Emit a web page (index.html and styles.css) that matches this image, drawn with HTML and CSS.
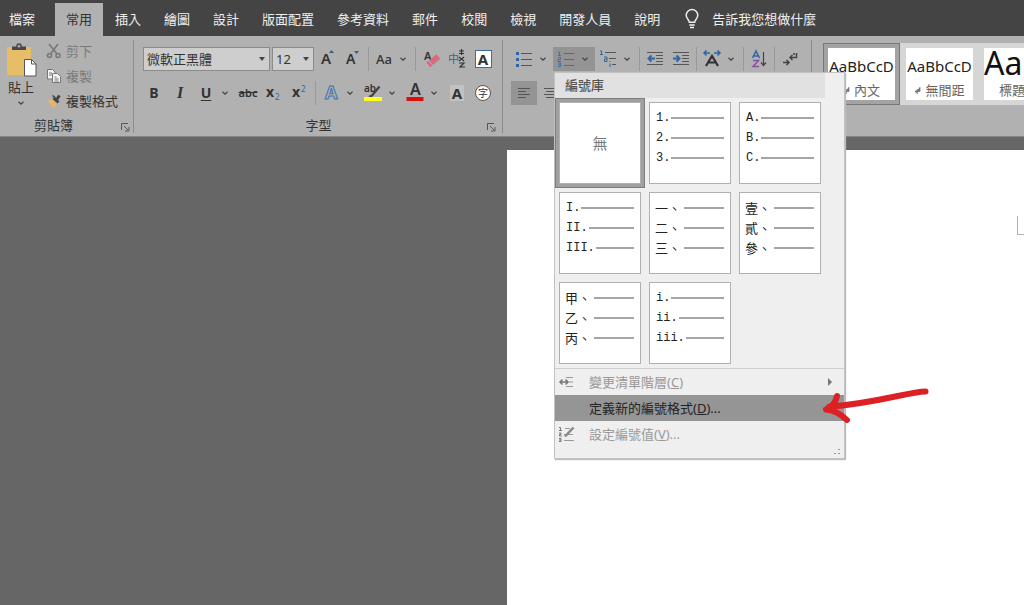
FILE: index.html
```html
<!DOCTYPE html>
<html lang="zh-Hant">
<head>
<meta charset="utf-8">
<title>Word</title>
<link rel="stylesheet" href="styles.css">
</head>
<body>
<svg class="defs" aria-hidden="true">
  <symbol id="chev" viewBox="0 0 6 4"><path d="M.5 .7 3 3.1 5.500 .7" fill="none" stroke="#444" stroke-width="1.200"/></symbol>
  <symbol id="launch" viewBox="0 0 9 9"><path d="M.5 7V.5H7M3 3l4 4M8 4v4H4" fill="none" stroke="#555"/></symbol>
  <symbol id="tri" viewBox="0 0 6 4"><path d="M0 0h6L3 4z" fill="#444"/></symbol>
  <symbol id="ret" viewBox="0 0 7 7"><path d="M6 0v4.500H2M3.500 2.500 1 4.500l2.500 2z" fill="#777" stroke="#777" stroke-width=".8"/></symbol>
</svg>

<nav class="tabs">
  <button class="tab file">檔案</button>
  <button class="tab active">常用</button>
  <button class="tab">插入</button>
  <button class="tab">繪圖</button>
  <button class="tab">設計</button>
  <button class="tab">版面配置</button>
  <button class="tab">參考資料</button>
  <button class="tab">郵件</button>
  <button class="tab">校閱</button>
  <button class="tab">檢視</button>
  <button class="tab">開發人員</button>
  <button class="tab">說明</button>
  <button class="tab tell">
    <svg width="14" height="20" viewBox="0 0 14 20"><path d="M4.300 13.200C4.300 10.800 1.200 9.800 1.200 6.300a5.800 5.800 0 0 1 11.600 0c0 3.500-3.100 4.500-3.100 6.900zM4.300 16h5.400M5 18.500h4" fill="none" stroke="#eee" stroke-width="1.500"/></svg>
    告訴我您想做什麼
  </button>
</nav>

<header class="ribbon">
  <section class="group clipboard">
    <div class="clip-body">
      <button class="paste">
        <svg width="32" height="36" viewBox="0 0 32 36"><path d="M2 5h24v28H2z" fill="#e8bd67"/><path d="M7 8V4.500h4l1-3h4l1 3h4V8z" fill="#484848"/><circle cx="14" cy="4.300" r="1.300" fill="#b1b1b1"/><path d="M19.500 17.500h7l4.500 4.500v12h-11.500z" fill="#fff" stroke="#555"/><path d="M26.500 17.500V22H31" fill="none" stroke="#555"/></svg>
        貼上
        <svg class="chev" width="6" height="4"><use href="#chev"/></svg>
      </button>
      <div class="clip-list">
        <button class="clip-item" disabled>
          <svg width="16" height="16" viewBox="0 0 16 16"><g fill="none" stroke="#777" stroke-width="1.500"><path d="M3 1l8 10M12 1L4.500 11"/><circle cx="3.500" cy="12.500" r="2"/><circle cx="12" cy="12.500" r="2"/></g></svg>剪下</button>
        <button class="clip-item" disabled>
          <svg width="16" height="16" viewBox="0 0 16 16"><g fill="#f4f4f4" stroke="#777"><path d="M1.500 1.500h5l2.500 2.500v7H1.500z"/><path d="M6.500 5.500h5l3 3v6h-8z"/><path d="M3 5h3M3 7h3M8.500 9h2M8.500 11h4M8.500 13h4"/></g></svg>複製</button>
        <button class="clip-item">
          <svg width="16" height="16" viewBox="0 0 16 16"><path d="M1.500 8l4.500-2 5 5-3.500 4z" fill="#e8b566"/><path d="M7.500 5l5 4.500M10 7.500l3.500-5" stroke="#444" stroke-width="3"/><path d="M6.500 2.500l3 2.500" stroke="#444" stroke-width="1.500"/></svg>複製格式</button>
      </div>
    </div>
    <div class="group-label">剪貼簿<button class="launcher" aria-label="剪貼簿選項"><svg width="9" height="9"><use href="#launch"/></svg></button></div>
  </section>

  <section class="group font">
    <div class="row">
      <span class="combo face"><select aria-label="字型"><option>微軟正黑體</option></select><svg width="6" height="4"><use href="#tri"/></svg></span>
      <span class="combo size"><select aria-label="字型大小"><option>12</option></select><svg width="6" height="4"><use href="#tri"/></svg></span>
      <button class="tool" aria-label="放大字型"><svg width="20" height="20" viewBox="0 0 20 20"><text class="ltr" x="4" y="15" font-size="15">A</text><path d="M12 4l2.500-3L17 4z" fill="#365f91"/></svg></button>
      <button class="tool" aria-label="縮小字型"><svg width="20" height="20" viewBox="0 0 20 20"><text class="ltr" x="3" y="15" font-size="14">A</text><path d="M11 2l2.500 3L16 2z" fill="#365f91"/></svg></button>
      <i class="sep"></i>
      <button class="split" aria-label="大小寫轉換"><span class="face-icon aa">Aa</span><svg class="chev" width="6" height="4"><use href="#chev"/></svg></button>
      <i class="sep"></i>
      <button class="tool" aria-label="清除格式設定"><svg width="20" height="20" viewBox="0 0 20 20"><text class="ltr" x="3" y="11" font-size="11">A</text><g transform="rotate(-40 12 12)"><path d="M6 9h13v6H6z" fill="#d9697c"/><path d="M9 9v6" stroke="#b1b1b1"/></g></svg></button>
      <button class="tool" aria-label="注音標示"><svg width="20" height="20" viewBox="0 0 20 20"><text class="cjk" x="1" y="14" font-size="11" fill="#2f66a5">中</text><path d="M12 2h5M12 4.500h5M14.500 0v6M12 8l5 4M17 8l-5 4M12 14h5l-4 4h5" fill="none" stroke="#333" stroke-width="1.200"/></svg></button>
      <button class="tool" aria-label="字元框線"><span class="boxed">A</span></button>
    </div>
    <div class="row">
      <button class="tool b">B</button>
      <button class="tool i">I</button>
      <button class="split" aria-label="底線"><span class="face-icon u">U</span><svg class="chev" width="6" height="4"><use href="#chev"/></svg></button>
      <button class="tool strike">abc</button>
      <button class="tool" aria-label="下標"><svg width="20" height="20" viewBox="0 0 20 20"><text class="ltr bold" x="2" y="14" font-size="14">x</text><text x="11" y="17" font-size="8" fill="#2f66a5">2</text></svg></button>
      <button class="tool" aria-label="上標"><svg width="20" height="20" viewBox="0 0 20 20"><text class="ltr bold" x="2" y="14" font-size="14">x</text><text x="11" y="9" font-size="8" fill="#2f66a5">2</text></svg></button>
      <i class="sep"></i>
      <button class="split" aria-label="文字效果"><span class="face-icon"><svg width="20" height="20" viewBox="0 0 20 20"><text class="glow" x="4" y="16" font-size="18">A</text></svg></span><svg class="chev" width="6" height="4"><use href="#chev"/></svg></button>
      <button class="split" aria-label="醒目提示"><span class="face-icon"><svg width="20" height="20" viewBox="0 0 20 20"><text class="ltr" x="1" y="9" font-size="10">ab</text><path d="M16.500 3.500 9 12.500l-3 1.500" fill="none" stroke="#444" stroke-width="2.200"/><path d="M1 14h18v4H1z" fill="#ffff1e"/></svg></span><svg class="chev" width="6" height="4"><use href="#chev"/></svg></button>
      <button class="split" aria-label="字型色彩"><span class="face-icon"><svg width="20" height="20" viewBox="0 0 20 20"><text class="ltr" x="5" y="12" font-size="16">A</text><path d="M1.500 14h17v4h-17z" fill="#e00d0d"/></svg></span><svg class="chev" width="6" height="4"><use href="#chev"/></svg></button>
      <button class="tool" aria-label="字元網底"><span class="shaded">A</span></button>
      <button class="tool" aria-label="圍繞字元"><span class="circled">字</span></button>
    </div>
    <div class="group-label">字型<button class="launcher" aria-label="字型選項"><svg width="9" height="9"><use href="#launch"/></svg></button></div>
  </section>

  <section class="group para">
    <div class="row">
      <button class="split" aria-label="項目符號"><span class="face-icon"><svg width="18" height="16" viewBox="0 0 18 16"><path d="M6 2.500h11M6 8.500h11M6 14.500h11" stroke="#555"/><path d="M1 1h3v3H1zM1 7h3v3H1zM1 13h3v3H1z" fill="#2f66a5"/></svg></span><svg class="chev" width="6" height="4"><use href="#chev"/></svg></button>
      <div class="menu-anchor">
        <button class="split on" aria-label="編號"><span class="face-icon"><svg width="18" height="16" viewBox="0 0 18 16"><path d="M7 2.500h10M7 8.500h10M7 14.500h10" stroke="#666"/><path d="M1 1h1.500v3.500M1 4.500h3M1 6.500h2.500v2H1v2h3M1 12h2.500v3.500H1M1 13.800h2" fill="none" stroke="#426fa5"/></svg></span><svg class="chev" width="6" height="4"><use href="#chev"/></svg></button>
        <div class="menu">
          <h2 class="menu-title">編號庫</h2>
          <div class="library">
            <button class="tile none">無</button>
            <button class="tile"><span class="line">1.</span><span class="line">2.</span><span class="line">3.</span></button>
            <button class="tile"><span class="line">A.</span><span class="line">B.</span><span class="line">C.</span></button>
            <button class="tile"><span class="line">I.</span><span class="line">II.</span><span class="line">III.</span></button>
            <button class="tile han"><span class="line">一、</span><span class="line">二、</span><span class="line">三、</span></button>
            <button class="tile han"><span class="line">壹、</span><span class="line">貳、</span><span class="line">參、</span></button>
            <button class="tile han"><span class="line">甲、</span><span class="line">乙、</span><span class="line">丙、</span></button>
            <button class="tile"><span class="line">i.</span><span class="line">ii.</span><span class="line">iii.</span></button>
          </div>
          <div class="commands">
            <button class="command" disabled><svg width="16" height="16" viewBox="0 0 16 16"><path d="M7 3.500h7M10 8h4M7 12.500h7" stroke="#999"/><path d="M1 8h8M3.500 5.500 1 8l2.500 2.500M6.500 5.500 9 8l-2.500 2.500" fill="none" stroke="#777" stroke-width="1.500"/></svg><span>變更清單階層(<u>C</u>)</span><svg class="more" width="4" height="8" viewBox="0 0 4 8"><path d="M0 0l4 4-4 4z" fill="#777"/></svg></button>
            <button class="command hover"><i class="blank"></i><span>定義新的編號格式(<u>D</u>)...</span></button>
            <button class="command" disabled><svg width="16" height="16" viewBox="0 0 16 16"><path d="M6 2.500h5M5 8.500h9M5 14.500h10" stroke="#999"/><path d="M14.500 1.500 6 10.500" stroke="#888" stroke-width="2.500"/><path d="M0 1.500h1.500V4M0 4.500h3M0 7h2v1.500H.5V10H3M0 12.500h2v3H0M0 14h2" fill="none" stroke="#777"/></svg><span>設定編號值(<u>V</u>)...</span></button>
          </div>
          <div class="grip"><svg width="8" height="8" viewBox="0 0 8 8"><path d="M5 1h2v1H5zM1 5h2v1H1zM5 5h2v1H5z" fill="#999"/></svg></div>
        </div>
      </div>
      <button class="split" aria-label="多層次清單"><span class="face-icon"><svg width="18" height="18" viewBox="0 0 18 18"><path d="M6 2.500h11M10 8.500h7M13 14.500h4" stroke="#555"/><path d="M1 1h1.500v4M1 4.500h3M5 7h3v4.500M8 9H5.500v2.500H8M11 11v1M11 13.500v3.500" fill="none" stroke="#2f66a5"/></svg></span><svg class="chev" width="6" height="4"><use href="#chev"/></svg></button>
      <i class="sep"></i>
      <button class="tool" aria-label="減少縮排"><svg width="16" height="16" viewBox="0 0 16 16"><path d="M0 1.500h16M9 4.500h7M9 7.500h7M9 10.500h7M0 13.500h16" stroke="#555"/><path d="M8 7.500H2M4.500 4.500l-3 3 3 3" fill="none" stroke="#2f66a5" stroke-width="2"/></svg></button>
      <button class="tool" aria-label="增加縮排"><svg width="16" height="16" viewBox="0 0 16 16"><path d="M0 1.500h16M9 4.500h7M9 7.500h7M9 10.500h7M0 13.500h16" stroke="#555"/><path d="M0 7.500h6M3.500 4.500l3 3-3 3" fill="none" stroke="#2f66a5" stroke-width="2"/></svg></button>
      <i class="sep"></i>
      <button class="split" aria-label="亞洲方式配置"><span class="face-icon"><svg width="20" height="20" viewBox="0 0 20 20"><path d="M4 17 10 7l6 10M6.500 13.500h7" fill="none" stroke="#333" stroke-width="2.200"/><path d="M2 4h6M4.500 1.500 2 4l2.500 2.500M12 4h6M15.500 1.500 18 4l-2.500 2.500" fill="none" stroke="#2f66a5" stroke-width="1.500"/></svg></span><svg class="chev" width="6" height="4"><use href="#chev"/></svg></button>
      <i class="sep"></i>
      <button class="tool" aria-label="排序"><svg width="16" height="18" viewBox="0 0 16 18"><path d="M1.500 8 5 1l3.500 7M2.500 6h5" fill="none" stroke="#2f66a5" stroke-width="1.500"/><path d="M2 10.500h5.500L2 16.500h6" fill="none" stroke="#8a4fa8" stroke-width="1.500"/><path d="M12.500 2v13M10 12.500l2.500 3 2.500-3" fill="none" stroke="#444" stroke-width="1.200"/></svg></button>
      <i class="sep"></i>
      <button class="tool" aria-label="顯示編輯標記"><svg width="16" height="16" viewBox="0 0 16 16"><path d="M14.500 2v4.500H8M10.500 4 8 6.500 10.500 9M12 2v2M1 11.500h6M4.500 9 7 11.500 4.500 14" fill="none" stroke="#444" stroke-width="1.500"/></svg></button>
    </div>
    <div class="row">
      <button class="tool on" aria-label="靠左對齊"><svg width="14" height="14" viewBox="0 0 14 14"><path d="M1 2.500h12M1 5.500h8M1 8.500h12M1 11.500h8" stroke="#555"/></svg></button>
      <button class="tool" aria-label="置中"><svg width="14" height="14" viewBox="0 0 14 14"><path d="M1 2.500h12M3 5.500h8M1 8.500h12M3 11.500h8" stroke="#555"/></svg></button>
    </div>
  </section>

  <section class="styles">
    <button class="style current"><span class="sample">AaBbCcD</span><span class="name"><svg width="7" height="7"><use href="#ret"/></svg>內文</span></button>
    <button class="style"><span class="sample">AaBbCcD</span><span class="name"><svg width="7" height="7"><use href="#ret"/></svg>無間距</span></button>
    <button class="style"><span class="sample big">Aa</span><span class="name">標題 1</span></button>
  </section>
</header>

<main class="workspace">
  <article class="page"><i class="margin-mark"></i></article>
</main>

<svg class="pointer" width="112" height="46" viewBox="0 0 112 46" aria-hidden="true"><path d="M105.500 9.500C88 10 62 20 9 25M17 14C16 20 11 25 6 27.500 14 28.500 21 32 27 38" fill="none" stroke="#dc2024" stroke-width="6" stroke-linecap="round" stroke-linejoin="round"/></svg>
</body>
</html>
```

FILE: styles.css
```css
* { box-sizing: border-box; }
body {
  margin: 0;
  min-height: 100vh;
  display: flex;
  flex-direction: column;
  overflow: hidden;
  position: relative;
  background: #666;
  color: #333;
  font: 13px/16px "Noto Sans", "Noto Sans CJK TC", sans-serif;
}
button, select {
  margin: 0;
  padding: 0;
  border: 0;
  background: none;
  color: inherit;
  font: inherit;
  white-space: nowrap;
}
svg { display: block; flex: none; overflow: visible; }
.defs { position: absolute; width: 0; height: 0; }

/* Tab strip */
.tabs {
  display: flex;
  gap: 1px;
  height: 36px;
  padding-top: 3px;
  background: #444;
  color: #f0f0f0;
}
.tab { flex: none; padding: 0 11px 2px; }
.tab.file { padding-right: 19px; padding-left: 9px; }
.tab.active { background: #b1b1b1; color: #333; }
.tab.tell {
  display: flex;
  align-items: center;
  gap: 13px;
  padding-left: 13px;
}

/* Ribbon */
.ribbon {
  display: flex;
  padding: 4px 0 3px;
  background: #b1b1b1;
  border-bottom: 1px solid #858585;
}
.group {
  flex: none;
  display: flex;
  flex-direction: column;
  padding: 7px 8px 0;
  border-right: 1px solid #8c8c8c;
}
.group.clipboard { padding: 0 3px 0 5px; }
.group.font { padding-right: 6px; padding-left: 7px; }
.group-label {
  display: flex;
  justify-content: center;
  align-items: center;
  position: relative;
  height: 16px;
  margin-top: auto;
}
.clipboard .group-label { padding-right: 28px; }
.font .group-label { margin-top: 12px; }
.launcher { position: absolute; right: 0; bottom: 1px; }
.clip-body { display: flex; gap: 9px; }
.paste {
  display: flex;
  flex-direction: column;
  align-items: center;
  gap: 1px;
  width: 32px;
  padding-top: 2px;
}
.paste .chev { margin-top: 5px; }
.clip-list { display: flex; flex-direction: column; gap: 3px; }
.clip-item {
  display: flex;
  align-items: center;
  gap: 4px;
  width: 84px;
  height: 22px;
}
.clip-item:disabled { color: #7b7b7b; }

.row { display: flex; height: 24px; }
.row + .row { margin-top: 10px; }
.font .row:first-child { padding-left: 2px; }
.tool, .split, .face-icon {
  display: flex;
  align-items: center;
  justify-content: center;
}
.tool, .face-icon { width: 26px; }
.split { width: 42px; height: 24px; justify-content: flex-start; }
.split .chev { margin-left: 3px; }
.on { background: #949494; }
.sep { width: 1px; margin: 0 2px; background: #999; }
.combo {
  position: relative;
  display: flex;
  align-items: center;
  margin-right: 2px;
  border: 1px solid #8b8b8b;
  background: #cecece;
}
.combo select { width: 100%; height: 100%; padding-left: 3px; appearance: none; }
.combo svg { position: absolute; right: 4px; pointer-events: none; }
.face { width: 127px; }
.size { width: 42px; margin-right: 0; }

.ltr { font-weight: 600; fill: #333; }
.ltr.bold { font-weight: 700; }
.cjk { font-family: "Noto Sans CJK TC", sans-serif; }
.glow { fill: #b1b1b1; stroke: #3f73ad; stroke-width: 1; font-weight: 700; }
.aa { font-weight: 500; }
.b, .u { font-size: 14px; font-weight: 700; }
.u { text-decoration: underline; text-underline-offset: 2px; }
.i { font: italic bold 16px "Liberation Serif", serif; }
.strike { font-size: 11px; font-weight: 600; text-decoration: line-through; }
.boxed {
  width: 17px;
  height: 18px;
  border: 1px solid #3f6a9c;
  background: #fff;
  font-size: 15px;
  font-weight: 700;
}
.shaded { width: 14px; background: #c2c2c2; font-size: 15px; font-weight: 700; }
.circled {
  width: 16px;
  height: 16px;
  border: 1px solid #555;
  border-radius: 50%;
  background: #fff;
  font-size: 10px;
  line-height: 14px;
}

/* Numbering menu */
.menu-anchor { position: relative; }
.menu {
  position: absolute;
  z-index: 2;
  top: 25px;
  left: 1px;
  width: 291px;
  border: 1px solid #c2c2c2;
  background: #efefef;
  box-shadow: 1px 1px 1px #bbb;
}
.menu-title {
  margin: 0 19px 0 0;
  padding: 0 10px;
  height: 25px;
  background: #e1e1e1;
  color: #555;
  font-size: 13px;
  font-weight: 500;
  line-height: 24px;
}
.library {
  display: grid;
  grid-template-columns: repeat(3, 82px);
  gap: 8px;
  padding: 4px;
}
.tile {
  display: flex;
  flex-direction: column;
  height: 82px;
  padding: 5px 6px;
  border: 1px solid #b0b0b0;
  background: #fff;
  color: #222;
  font: 12px/20px "Liberation Mono", monospace;
}
.tile.han { font: 13px/18px "Noto Sans CJK TC", sans-serif; padding-left: 5px; }
.line { display: flex; align-items: center; gap: 1px; width: 100%; height: 20px; }
.line::after { content: ""; flex: 1; height: 2px; background: #a5a5a5; }
.han .line { gap: 3px; }
.tile.none {
  align-items: center;
  justify-content: center;
  color: #777;
  font: 15px/20px "Noto Sans CJK TC", sans-serif;
  box-shadow: 0 0 0 3px #a0a0a0, 0 0 0 4px #7d7d7d;
}
.commands { border-top: 1px solid #cfcfcf; }
.command {
  display: flex;
  align-items: center;
  gap: 14px;
  width: 100%;
  height: 26px;
  padding: 0 12px 0 4px;
  color: #222;
}
.command:disabled { color: #999; }
.command.hover { background: #959595; }
.blank { width: 16px; }
.more { margin-left: auto; }
.grip { display: flex; justify-content: flex-end; padding: 1px 3px 2px; }

/* Style gallery */
.styles {
  flex: 1;
  min-width: 0;
  display: flex;
  gap: 1px;
  height: 62px;
  margin: 3px 0 0 11px;
  overflow: hidden;
  background: #d6d6d6;
}
.style {
  flex: none;
  display: flex;
  flex-direction: column;
  align-items: center;
  width: 77px;
  padding: 4px;
  border: 1px solid #d6d6d6;
  background: #fff;
  background-clip: content-box;
}
.style.current {
  border-color: #777;
  background: linear-gradient(#fff, #fff) content-box, #a3a3a3;
}
.sample {
  height: 34px;
  color: #222;
  font-size: 15px;
  line-height: 36px;
}
.sample.big { align-self: flex-start; font-size: 32px; line-height: 30px; color: #111; }
.name { display: flex; align-items: center; gap: 4px; color: #666; }

/* Document */
.workspace { flex: 1; display: flex; padding-top: 13px; }
.page {
  flex: 1;
  display: flex;
  justify-content: flex-end;
  align-items: flex-start;
  margin-left: 507px;
  padding-top: 66px;
  background: #fff;
}
.margin-mark { width: 7px; height: 19px; border: solid #b0b0b0; border-width: 0 0 1px 1px; }

.pointer { position: absolute; z-index: 3; top: 382px; left: 820px; }
```
